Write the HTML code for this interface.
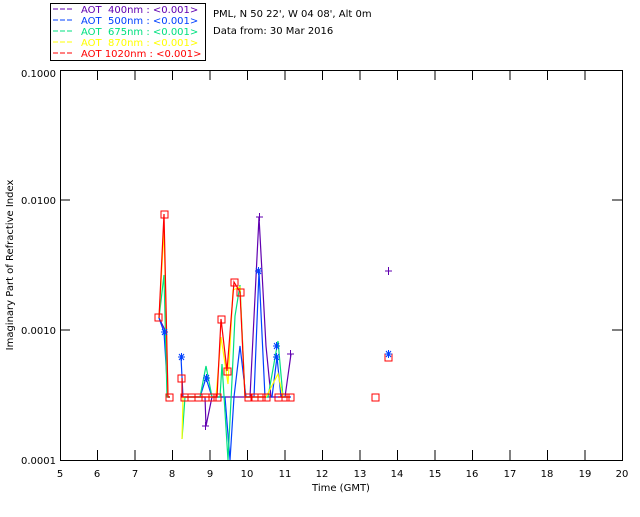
<!DOCTYPE html><html><head><style>body{margin:0;background:#fff}svg text{font-family:"DejaVu Sans","Liberation Sans",sans-serif;font-size:10px;white-space:pre}</style></head><body>
<svg width="640" height="512" xmlns="http://www.w3.org/2000/svg" xml:space="preserve">
<rect x="50.5" y="3.5" width="155" height="57" fill="none" stroke="#000"/>
<g font-size="10">
<line x1="53" y1="9" x2="74" y2="9" stroke="#6000b0" stroke-dasharray="5,2"/><text x="81" y="13" fill="#6000b0">AOT  400nm : &lt;0.001&gt;</text>
<line x1="53" y1="20" x2="74" y2="20" stroke="#0040ff" stroke-dasharray="5,2"/><text x="81" y="24" fill="#0040ff">AOT  500nm : &lt;0.001&gt;</text>
<line x1="53" y1="31" x2="74" y2="31" stroke="#00e080" stroke-dasharray="5,2"/><text x="81" y="35" fill="#00e080">AOT  675nm : &lt;0.001&gt;</text>
<line x1="53" y1="42" x2="74" y2="42" stroke="#ffff00" stroke-dasharray="5,2"/><text x="81" y="46" fill="#ffff00">AOT  870nm : &lt;0.001&gt;</text>
<line x1="53" y1="53" x2="74" y2="53" stroke="#ff0000" stroke-dasharray="5,2"/><text x="81" y="57" fill="#ff0000">AOT 1020nm : &lt;0.001&gt;</text>
<text x="213" y="17">PML, N 50 22', W 04 08', Alt 0m</text>
<text x="213" y="34">Data from: 30 Mar 2016</text>
</g>
<rect x="60.5" y="70.5" width="562" height="390" fill="none" stroke="#000"/>
<g stroke="#000">
<path d="M60 200h10M60 330h10M612 200h10M612 330h10"/>
<path d="M97.5 460v-10M135 460v-10M172.5 460v-10M210 460v-10M247.5 460v-10M285 460v-10M322.5 460v-10M360 460v-10M397.5 460v-10M435 460v-10M472.5 460v-10M510 460v-10M547.5 460v-10M585 460v-10M97.5 70v10M135 70v10M172.5 70v10M210 70v10M247.5 70v10M285 70v10M322.5 70v10M360 70v10M397.5 70v10M435 70v10M472.5 70v10M510 70v10M547.5 70v10M585 70v10"/>
</g>
<g text-anchor="end"><text x="56" y="77">0.1000</text><text x="56" y="204">0.0100</text><text x="56" y="334">0.0010</text><text x="56" y="464">0.0001</text></g>
<g text-anchor="middle"><text x="60" y="477">5</text><text x="97" y="477">6</text><text x="135" y="477">7</text><text x="172" y="477">8</text><text x="210" y="477">9</text><text x="247" y="477">10</text><text x="285" y="477">11</text><text x="322" y="477">12</text><text x="360" y="477">13</text><text x="397" y="477">14</text><text x="435" y="477">15</text><text x="472" y="477">16</text><text x="510" y="477">17</text><text x="547" y="477">18</text><text x="585" y="477">19</text><text x="622" y="477">20</text>
<text x="341" y="491">Time (GMT)</text>
<text transform="translate(13 265) rotate(-90)">Imaginary Part of Refractive Index</text></g>
<g fill="none" stroke-width="1.2">
<polyline stroke="#6000b0" points="159,318 165,330 168,397 170,397"/>
<polyline stroke="#6000b0" points="185,397 205,397 206,426 212,397 233,397 250,397 259,217 266,346 271,397 280,397 285,397 291,354"/>
<polyline stroke="#0040ff" points="159,318 164,332 168,397 170,397"/>
<polyline stroke="#0040ff" points="181,357 183,397 200,397 206,378 212,397 225,397 230,460 234,397 240,346 246,397 254,397 259,271 265,397 272,397 277,357 281,397 291,397"/>
<polyline stroke="#00e080" points="159,318 164,275 167,397 170,397"/>
<polyline stroke="#00e080" points="182,439 185,397 200,397 206,366 212,397 220,397 222,364 228,460 232,380 235,316 240,285 245,397 262,397 268,397 278,341 283,397 290,397"/>
<polyline stroke="#ffff00" points="159,318 164,230 168,397 170,397"/>
<polyline stroke="#ffff00" points="182,439 183,397 200,397 206,397 216,397 221,337 228,384 233,290 240,287 245,397 266,397 278,374 283,397 290,397"/>
<polyline stroke="#ff0000" points="159,318 164,214 168,397 170,397"/>
<polyline stroke="#ff0000" points="182,378 182,397 217,397 221,319 227,371 234,282 240,292 245,397 266,397"/>
<polyline stroke="#ff0000" points="278,397 290,397"/>
</g>
<g fill="none" stroke="#ff0000">
<rect x="155" y="314" width="7" height="7"/><rect x="161" y="211" width="7" height="7"/><rect x="166" y="394" width="7" height="7"/>
<rect x="178" y="375" width="7" height="7"/>
<rect x="181" y="394" width="7" height="7"/><rect x="188" y="394" width="7" height="7"/><rect x="195" y="394" width="7" height="7"/><rect x="202" y="394" width="7" height="7"/><rect x="209" y="394" width="7" height="7"/><rect x="214" y="394" width="7" height="7"/>
<rect x="218" y="316" width="7" height="7"/><rect x="224" y="368" width="7" height="7"/><rect x="231" y="279" width="7" height="7"/><rect x="237" y="289" width="7" height="7"/>
<rect x="245" y="394" width="7" height="7"/><rect x="251" y="394" width="7" height="7"/><rect x="258" y="394" width="7" height="7"/><rect x="263" y="394" width="7" height="7"/>
<rect x="275" y="394" width="7" height="7"/><rect x="282" y="394" width="7" height="7"/><rect x="287" y="394" width="7" height="7"/>
<rect x="372" y="394" width="7" height="7"/><rect x="385" y="354" width="7" height="7"/>
</g>
<g stroke="#6000b0"><path d="M385 271h7M388.5 267v8M256 217h7M259.5 213v8M287 354h7M290.5 350v8M202 426h7M205.5 422v8"/></g>
<g stroke="#0040ff"><path d="M178 357h7M181.5 353v8M179 354l5 6M184 354l-5 6M255 271h7M258.5 267v8M256 268l5 6M261 268l-5 6M273 346h7M276.5 342v8M274 343l5 6M279 343l-5 6M273 357h7M276.5 353v8M274 354l5 6M279 354l-5 6M385 354h7M388.5 350v8M386 351l5 6M391 351l-5 6M161 332h7M164.5 328v8M162 329l5 6M167 329l-5 6M203 378h7M206.5 374v8M204 375l5 6M209 375l-5 6"/></g>
</svg>
</body></html>
